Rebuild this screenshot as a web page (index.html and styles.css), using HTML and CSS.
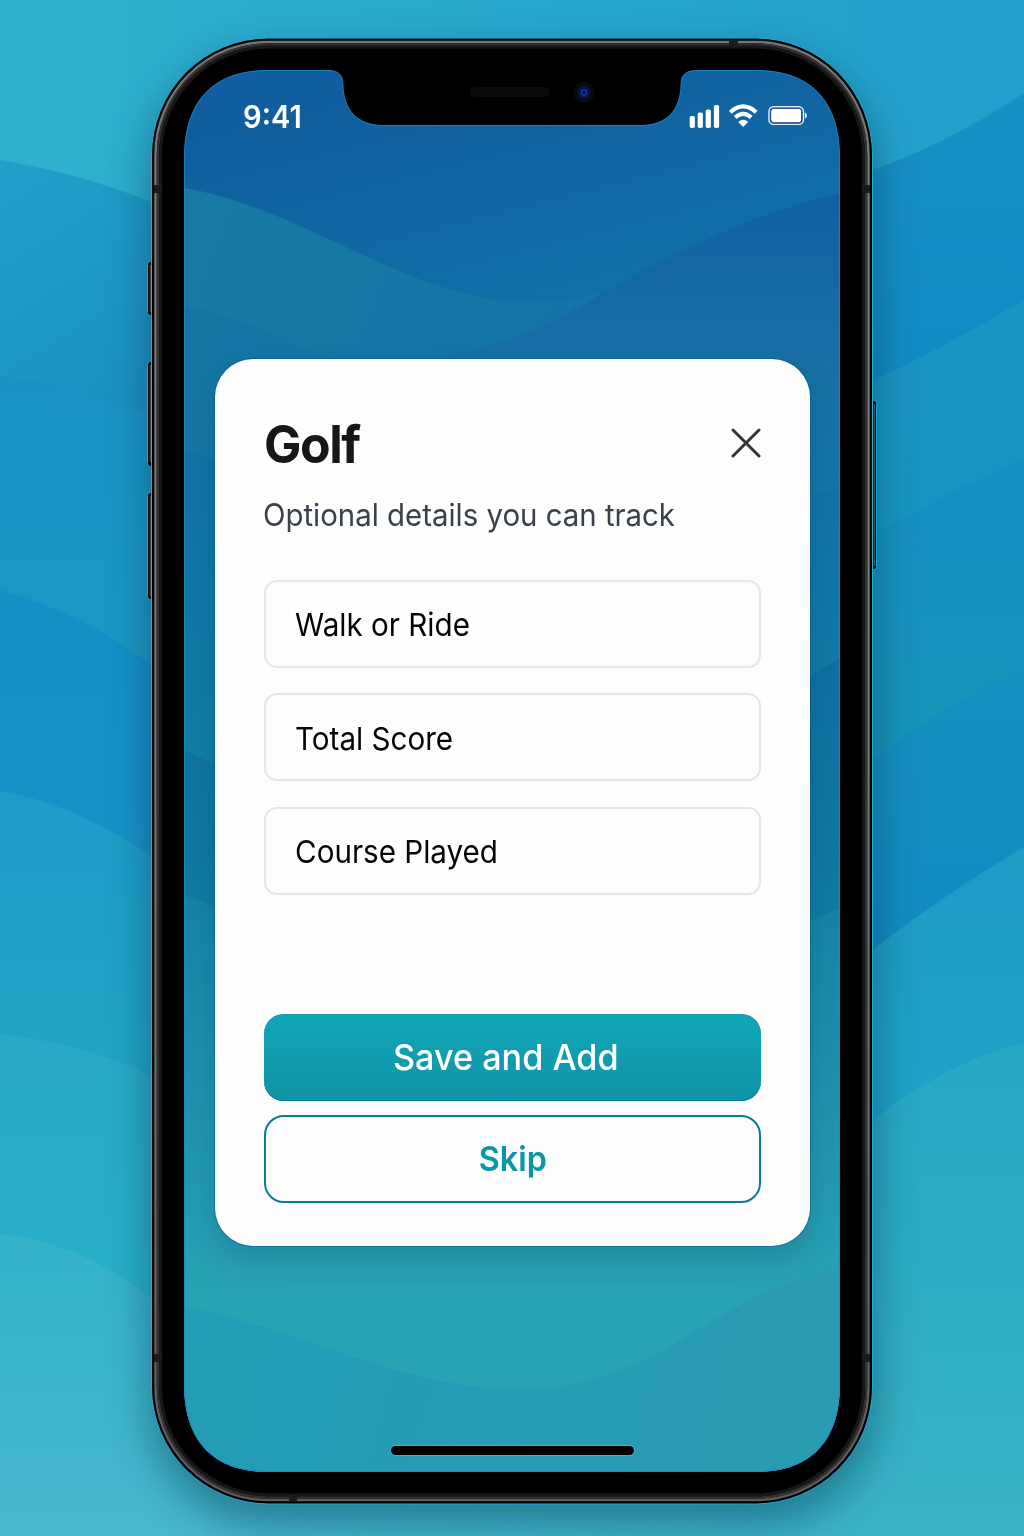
FILE: index.html
```html
<!DOCTYPE html>
<html lang="en">
<head>
<meta charset="utf-8">
<title>Golf details</title>
<link rel="stylesheet" href="styles.css">
</head>
<body>
<main class="stage">
  <svg class="backdrop" viewBox="0 0 1024 1536" aria-hidden="true">
    <defs>
      <linearGradient id="b0" x1="0" y1="0" x2="1" y2="0"><stop offset="0" stop-color="#2fb1ce"/><stop offset="1" stop-color="#229fca"/></linearGradient>
      <linearGradient id="b1" gradientUnits="userSpaceOnUse" x1="0" y1="160" x2="150" y2="400"><stop offset="0" stop-color="#229fca"/><stop offset="1" stop-color="#1b90bf"/></linearGradient>
      <linearGradient id="b2" gradientUnits="userSpaceOnUse" x1="0" y1="376" x2="0" y2="650"><stop offset="0" stop-color="#1a93c4"/><stop offset="1" stop-color="#1b98c2"/></linearGradient>
      <linearGradient id="b3" gradientUnits="userSpaceOnUse" x1="0" y1="590" x2="0" y2="850"><stop offset="0" stop-color="#1490c5"/><stop offset="1" stop-color="#1793c7"/></linearGradient>
      <linearGradient id="b4" gradientUnits="userSpaceOnUse" x1="0" y1="790" x2="0" y2="1070"><stop offset="0" stop-color="#1f9bc8"/><stop offset="1" stop-color="#21a5c5"/></linearGradient>
      <linearGradient id="b5" gradientUnits="userSpaceOnUse" x1="0" y1="1034" x2="0" y2="1290"><stop offset="0" stop-color="#29a9c7"/><stop offset="1" stop-color="#29afc9"/></linearGradient>
      <linearGradient id="b6" gradientUnits="userSpaceOnUse" x1="0" y1="1234" x2="0" y2="1536"><stop offset="0" stop-color="#33b2c9"/><stop offset="1" stop-color="#48b8ce"/></linearGradient>
      <linearGradient id="r1" gradientUnits="userSpaceOnUse" x1="0" y1="93" x2="0" y2="380"><stop offset="0" stop-color="#1790c6"/><stop offset="1" stop-color="#118bc4"/></linearGradient>
      <linearGradient id="r2" gradientUnits="userSpaceOnUse" x1="0" y1="300" x2="0" y2="535"><stop offset="0" stop-color="#1b94c2"/><stop offset="1" stop-color="#1796be"/></linearGradient>
      <linearGradient id="r3" gradientUnits="userSpaceOnUse" x1="0" y1="459" x2="0" y2="758"><stop offset="0" stop-color="#168fc2"/><stop offset="1" stop-color="#1795b9"/></linearGradient>
      <linearGradient id="r4" gradientUnits="userSpaceOnUse" x1="0" y1="669" x2="0" y2="950"><stop offset="0" stop-color="#1590c1"/><stop offset="1" stop-color="#128bc0"/></linearGradient>
      <linearGradient id="r5" gradientUnits="userSpaceOnUse" x1="0" y1="847" x2="0" y2="1121"><stop offset="0" stop-color="#1f9bc6"/><stop offset="1" stop-color="#1ea3c5"/></linearGradient>
      <linearGradient id="r6" gradientUnits="userSpaceOnUse" x1="0" y1="1043" x2="0" y2="1536"><stop offset="0" stop-color="#28a7c5"/><stop offset=".45" stop-color="#2cadc3"/><stop offset="1" stop-color="#3cb2c6"/></linearGradient>
      <linearGradient id="fade" gradientUnits="userSpaceOnUse" x1="200" y1="0" x2="860" y2="0"><stop offset="0" stop-color="#000"/><stop offset="1" stop-color="#fff"/></linearGradient>
      <mask id="right-side" maskUnits="userSpaceOnUse" x="0" y="0" width="1024" height="1536"><rect width="1024" height="1536" fill="url(#fade)"/></mask>
      <filter id="soft" x="-20%" y="-20%" width="140%" height="140%"><feGaussianBlur stdDeviation="22"/></filter>
      <linearGradient id="metal" x1="0" y1="0" x2="0" y2="1"><stop offset="0" stop-color="#77777a"/><stop offset=".5" stop-color="#707274"/><stop offset="1" stop-color="#5c5c5e"/></linearGradient>
      <clipPath id="glass"><path d="M184 158C184 102 212 70 268 70H327C338 70 343 75 343 84C343 109 357 125 382 125H642C667 125 681 109 681 84C681 75 686 70 697 70H756C812 70 840 102 840 158V1384C840 1440 812 1472 756 1472H268C212 1472 184 1440 184 1384Z"/></clipPath>
      <linearGradient id="s0" gradientUnits="userSpaceOnUse" x1="480" y1="70" x2="540" y2="310"><stop offset="0" stop-color="#105e9f"/><stop offset="1" stop-color="#1070a6"/></linearGradient>
      <linearGradient id="s1" gradientUnits="userSpaceOnUse" x1="184" y1="190" x2="600" y2="340"><stop offset="0" stop-color="#197aa4"/><stop offset="1" stop-color="#1373a6"/></linearGradient>
      <linearGradient id="s2" gradientUnits="userSpaceOnUse" x1="0" y1="195" x2="0" y2="660"><stop offset="0" stop-color="#1161a0"/><stop offset=".35" stop-color="#176fa4"/><stop offset="1" stop-color="#107fa8"/></linearGradient>
      <linearGradient id="s3" gradientUnits="userSpaceOnUse" x1="0" y1="450" x2="0" y2="780"><stop offset="0" stop-color="#1171a4"/><stop offset="1" stop-color="#107fa6"/></linearGradient>
      <linearGradient id="s5" gradientUnits="userSpaceOnUse" x1="0" y1="660" x2="0" y2="910"><stop offset="0" stop-color="#0d6f9f"/><stop offset="1" stop-color="#107ba3"/></linearGradient>
      <linearGradient id="s6" gradientUnits="userSpaceOnUse" x1="0" y1="890" x2="0" y2="1300"><stop offset="0" stop-color="#1482a6"/><stop offset="1" stop-color="#29a2b4"/></linearGradient>
      <linearGradient id="s4" gradientUnits="userSpaceOnUse" x1="184" y1="1300" x2="840" y2="1472"><stop offset="0" stop-color="#239cb5"/><stop offset="1" stop-color="#2a9bb1"/></linearGradient>
    </defs>

    <rect width="1024" height="1536" fill="url(#b0)"/>
    <path fill="url(#b1)" d="M0 160Q75 172 152 202H512V1536H0Z"/>
    <path fill="url(#b2)" d="M0 376Q75 382 152 416H512V1536H0Z"/>
    <path fill="url(#b3)" d="M0 590Q80 612 152 665H512V1536H0Z"/>
    <path fill="url(#b4)" d="M0 791Q70 802 152 856H512V1536H0Z"/>
    <path fill="url(#b5)" d="M0 1034Q85 1044 152 1076H512V1536H0Z"/>
    <path fill="url(#b6)" d="M0 1234Q80 1242 152 1299H1024V1536H0Z"/>
    <path fill="url(#r1)" d="M1024 93Q945 145 872 170H512V1200H1024Z"/>
    <path fill="url(#r2)" d="M1024 300Q940 350 872 381H512V1200H1024Z"/>
    <path fill="url(#r3)" d="M1024 459Q950 491 872 536H512V1200H1024Z"/>
    <path fill="url(#r4)" d="M1024 669Q945 704 872 759H512V1200H1024Z"/>
    <path fill="url(#r5)" d="M1024 847Q945 894 872 950H512V1200H1024Z"/>
    <path fill="url(#r6)" d="M1024 1043Q950 1060 872 1121H800V1400H1024Z"/>
    <path fill="url(#r6)" mask="url(#right-side)" d="M160 1390H1024V1536H160Z"/>

    <rect x="150" y="56" width="724" height="1466" rx="116" fill="#00344f" opacity=".48" filter="url(#soft)"/>

    <g fill="#050505" stroke="#16a5d0" stroke-width="1">
      <rect x="147.500" y="261.500" width="12" height="54" rx="3"/>
      <rect x="147.500" y="361.500" width="12" height="105" rx="3"/>
      <rect x="147.500" y="492.500" width="12" height="107" rx="3"/>
      <rect x="864" y="400.500" width="12.500" height="169" rx="3"/>
    </g>
    <path d="M150.500 265V312M150.500 365V462M150.500 496V596M874.500 404V566" stroke="#4a4a4c" stroke-width="1.500"/>

    <rect x="151.500" y="38" width="721" height="1466" rx="117" fill="#000" stroke="#1cafd8" stroke-width="1"/>
    <rect x="155.500" y="42" width="713" height="1458" rx="113" fill="none" stroke="url(#metal)" stroke-width="2.500"/>
    <rect x="158" y="44.500" width="708" height="1453" rx="110" fill="none" stroke="#303132" stroke-width="2.500"/>
    <rect x="160.500" y="47" width="703" height="1448" rx="108" fill="none" stroke="#171717" stroke-width="3"/>
    <g fill="#1b1b1b">
      <rect x="154" y="185" width="7" height="8"/><rect x="863" y="185" width="7" height="8"/>
      <rect x="154" y="1354" width="7" height="8"/><rect x="863" y="1354" width="7" height="8"/>
      <rect x="729" y="41" width="9" height="6"/><rect x="289" y="1495" width="8" height="6"/>
    </g>

    <g clip-path="url(#glass)">
      <rect x="184" y="70" width="656" height="1402" fill="url(#s0)"/>
      <path fill="url(#s1)" d="M184 188C300 207 415 302 525 302C555 302 580 301 612 288V500H184Z"/>
      <path fill="#1672a3" opacity=".45" d="M184 305Q240 317 290 342L340 365V500H184Z"/>
      <path fill="url(#s2)" d="M450 355C530 340 565 314 612 288C695 242 765 209 840 194V1000H450Z"/>
      <path fill="url(#s3)" d="M184 452L214 459L810 498L840 485V1000H184Z"/>
      <path fill="url(#s5)" d="M184 750L214 764L810 676L840 658V1000H184Z"/>
      <path fill="url(#s6)" d="M184 895L214 906L810 922L840 908V1472H184Z"/>
      <path fill="url(#s4)" d="M184 1307C290 1325 400 1389 517 1389C660 1389 700 1300 840 1266V1472H184Z"/>
    </g>
    <path fill="none" stroke="#1988c7" stroke-opacity=".8" d="M184.500 158C184.500 102 212 70.500 268 70.500H327C338 70 343 75 343 84C343 109 357 125.500 382 125.500H642C667 125.500 681 109 681 84C681 75 686 70.500 697 70.500H756C812 70.500 839.500 102 839.500 158V1384C839.500 1440 812 1471.500 756 1471.500H268C212 1471.500 184.500 1440 184.500 1384Z"/>
    <rect x="470" y="87" width="80" height="10" rx="5" fill="#0a0a0b"/>
    <circle cx="584" cy="92.500" r="10.500" fill="#090a0e"/>
    <circle cx="584" cy="92.500" r="6" fill="#071554"/>
    <circle cx="584" cy="92.500" r="3.200" fill="#1230a8"/>
    <circle cx="584" cy="92.500" r="1.500" fill="#040a30"/>
  </svg>

  <section class="screen">
    <header class="status">
      <span class="time">9:41</span>
      <svg class="indicators" viewBox="0 0 120 30" fill="#fff" aria-hidden="true">
        <rect x="3.700" y="15" width="5.200" height="12" rx="1.800"/>
        <rect x="11.700" y="11.500" width="5.200" height="15.500" rx="1.800"/>
        <rect x="19.700" y="8.500" width="5.200" height="18.500" rx="1.800"/>
        <rect x="27.900" y="4" width="5.200" height="23" rx="1.800"/>
        <path d="M44.300 11.200Q57.200 -.4 70.200 11.200M49.200 16.400Q57.200 9.400 65.200 16.400" fill="none" stroke="#fff" stroke-width="4"/>
        <path d="M52.200 21Q57.200 16.600 62.200 21L57.200 26Z"/>
        <rect x="83" y="5.800" width="34.400" height="17.600" rx="4.500" fill="none" stroke="#e6edf8" stroke-width="1.400"/>
        <rect x="84.700" y="7.300" width="31" height="14.500" rx="3" stroke="#17327f" stroke-width="1"/>
        <path d="M118.800 11.500Q121 12.500 121 14.600Q121 16.700 118.800 17.700Z"/>
      </svg>
    </header>

    <article class="card">
      <div class="heading">
        <h1 class="title">Golf</h1>
        <svg class="close" viewBox="0 0 30 30" aria-label="Close"><path d="M2 2L28 28M28 2L2 28" stroke="#333438" stroke-width="3" stroke-linecap="round"/></svg>
      </div>
      <p class="subtitle">Optional details you can track</p>
      <div class="fields">
        <div class="field"><span>Walk or Ride</span></div>
        <div class="field"><span>Total Score</span></div>
        <div class="field"><span>Course Played</span></div>
      </div>
      <div class="actions">
        <button class="button save"><span>Save and Add</span></button>
        <button class="button skip"><span>Skip</span></button>
      </div>
    </article>
    <div class="home"></div>
  </section>
</main>
</body>
</html>
```

FILE: styles.css
```css
* { box-sizing: border-box; }

body {
  margin: 0;
  font-family: Inter, "Liberation Sans", sans-serif;
}

.stage {
  position: relative;
  width: 1024px;
  height: 1536px;
  padding: 70px 184px 64px;
  overflow: hidden;
}

.backdrop {
  position: absolute;
  inset: 0;
  width: 1024px;
  height: 1536px;
}

.screen {
  position: relative;
  display: flex;
  flex-direction: column;
  height: 1402px;
}

.status {
  display: flex;
  align-items: center;
  justify-content: space-between;
  height: 92px;
  padding: 0 34px 0 59px;
}

.time {
  color: #fff;
  font-size: 31px;
  font-weight: 600;
  transform: scaleX(.94);
  transform-origin: left;
}

.indicators {
  width: 120px;
  height: 30px;
  overflow: visible;
}

.card {
  display: flex;
  flex-direction: column;
  width: 595px;
  height: 886.500px;
  margin: 197px 0 0 31px;
  padding: 54px 49px 43px;
  border-radius: 38px;
  background: #fdfdfd;
  box-shadow: 0 0 0 1px rgba(0, 91, 140, .5), 0 12px 28px rgba(0, 50, 80, .2);
}

.heading {
  display: flex;
  align-items: center;
  justify-content: space-between;
  height: 64px;
}

.title {
  margin: 0;
  color: #171718;
  font-size: 52px;
  font-weight: 700;
  letter-spacing: -1.500px;
  line-height: 64px;
  transform: scaleX(.96);
  transform-origin: left;
}

.close {
  width: 30px;
  height: 30px;
  margin-top: -5px;
}

.subtitle {
  align-self: flex-start;
  margin: 18px 0 44.500px -1px;
  color: #39424c;
  font-size: 31px;
  line-height: 40px;
  white-space: nowrap;
  transform: scaleX(.948);
  transform-origin: left;
}

.fields {
  display: grid;
  gap: 25.500px;
}

.field {
  display: flex;
  align-items: center;
  height: 88px;
  padding: 2px 0 0 29px;
  border: 2px solid #e6e6e7;
  border-radius: 13px;
  color: #050505;
  font-size: 31.500px;
}

.field span {
  transform: scaleX(.94);
  transform-origin: left;
}

.actions {
  display: grid;
  gap: 14px;
  margin-top: auto;
}

.button {
  height: 87.500px;
  padding: 0;
  border: 0;
  border-radius: 20px;
  font-family: inherit;
}

.button span {
  display: inline-block;
  transform: scaleX(.95);
}

.save {
  padding-right: 14px;
  background: linear-gradient(#0fa7b7, #1292a6);
  box-shadow: inset 0 -1px #087e98, inset 0 1px #129bad;
  color: #fff;
  font-size: 36px;
  font-weight: 500;
}

.skip {
  border: 2px solid #087c97;
  background: #fdfdfd;
  color: #0897a6;
  font-size: 34px;
  font-weight: 600;
}

.home {
  width: 243px;
  height: 9px;
  margin: auto auto 17px 207px;
  border-radius: 5px;
  background: #000;
  box-shadow: 0 0 0 1px #2fb8d2;
}
```
